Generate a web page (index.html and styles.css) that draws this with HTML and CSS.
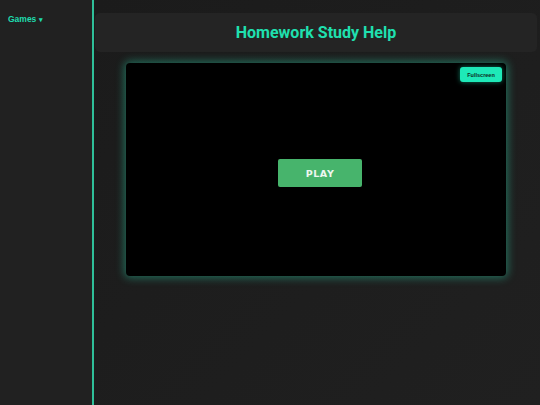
FILE: index.html
```html
<!DOCTYPE html>
<html>
<head>
<meta charset="utf-8">
<link rel="stylesheet" href="styles.css">
</head>
<body>
<div class="app">
  <aside class="sidebar">
    <div class="menu">Games <span class="caret">▾</span></div>
  </aside>
  <main class="main">
    <header class="header"><h1>Homework Study Help</h1></header>
    <section class="game">
      <button class="fs">Fullscreen</button>
      <button class="play">PLAY</button>
    </section>
  </main>
</div>
</body>
</html>
```
FILE: styles.css
```css
html, body { margin: 0; height: 100%; }
body {
  background: #1c1c1c;
  font-family: "Liberation Sans", Arial, sans-serif;
}
.app { display: flex; height: 405px; }
.sidebar {
  flex: none;
  background: #212121;
  border-right: 2px solid #2fbf99;
  box-sizing: border-box;
  width: 94px;
  padding: 14px 0 0 8px;
}
.menu {
  color: #1fdcae;
  font-weight: bold;
  font-size: 8.5px;
}
.caret { font-size: 7px; }
.main {
  flex: 1;
  padding: 13px 3px 0 1px;
  background: linear-gradient(135deg, #1b1b1b 0%, #1e1e1e 60%, #202020 100%);
  display: flex;
  flex-direction: column;
  align-items: center;
}
.header {
  align-self: stretch;
  height: 39px;
  background: #242424;
  border-radius: 5px;
  display: flex;
  align-items: center;
  justify-content: center;
}
.header h1 {
  margin: 0;
  font-family: Roboto, "Liberation Sans", sans-serif;
  font-weight: 700;
  font-size: 16px;
  color: #1fe0b0;
}
.game {
  position: relative;
  margin-top: 11px;
  width: 380px;
  height: 213px;
  background: #000;
  border-radius: 4px;
  box-shadow: 0 0 8px 2px rgba(40, 200, 160, 0.45);
  display: flex;
  align-items: center;
  justify-content: center;
}
.fs {
  position: absolute;
  top: 4px;
  right: 4px;
  width: 42px;
  height: 15px;
  padding: 0;
  border: none;
  border-radius: 3px;
  background: #1ee9b8;
  color: #0c2a22;
  font-family: "Liberation Sans", Arial, sans-serif;
  font-weight: bold;
  font-size: 5.5px;
  box-shadow: 0 0 5px rgba(30, 233, 184, 0.5);
}
.play {
  width: 84px;
  height: 28px;
  margin: 7px 0 0 8px;
  border: none;
  border-radius: 2px;
  background: #47b46c;
  color: #eef7f0;
  font-family: "DejaVu Sans", Verdana, sans-serif;
  font-weight: bold;
  font-size: 9.5px;
  letter-spacing: 0.6px;
  padding: 0;
}
```
